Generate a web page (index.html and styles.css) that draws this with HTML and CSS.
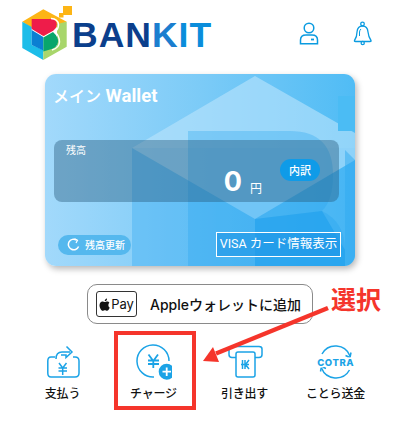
FILE: index.html
```html
<!DOCTYPE html>
<html lang="ja">
<head>
  <meta charset="UTF-8">
  <meta name="viewport" content="width=device-width, initial-scale=1.0">
  <title>BANKIT</title>
  <link rel="stylesheet" href="styles.css">
</head>
<body>
  <div class="page">
    <!-- Header with logo and account icons -->
    <div class="header">
      <svg class="logo" width="50" height="55" viewBox="22 6 50 55">
        <polygon points="43.300,9.300 66.700,21.700 60,25 44,36 22.300,21.700" fill="#fdb515"/>
        <polygon points="22.300,21.700 31.700,27 31.700,45 43.300,50 43.300,60 22.300,48" fill="#1dbde9"/>
        <polygon points="66.700,21.700 66.700,46.700 43.300,60 43.300,51 57,46 57,24" fill="#a8d66b"/>
        <polygon points="31.700,30 43.300,37 43.300,50.500 31.700,45" fill="#0b80d2"/>
        <path d="M43.300 37.500L53 32Q58.500 37 58 42Q57 48 50 49.500L43.300 51.500Z" fill="#08a66c"/>
        <path d="M31.700 19H51Q56.700 19 56.700 24.500Q56.500 29 51 32L43.300 36L31.700 29Z" fill="#ee1c4a"/>
        <path d="M51 18.500Q58 19 58.500 24.500Q58.500 29 55 32Q59.500 36 59.500 42Q59 48 52 50" fill="none" stroke="#fff" stroke-width="1.500"/>
        <rect x="63" y="6" width="9" height="9" fill="#fdb515"/>
        <rect x="59" y="13" width="4.500" height="4.500" fill="#fdb515"/>
      </svg>
      <div class="brand"><span class="brand-dark">BAN</span><span class="brand-k">K</span><span class="brand-light">IT</span></div>
      <div class="header-icons">
        <svg width="26" height="26" viewBox="296 20 26 26" fill="none" stroke="#0a9be0" stroke-width="1.500">
          <circle cx="309" cy="28" r="4.800"/>
          <path d="M300.500 43.800V40Q300.500 35 306 35H312Q317.500 35 317.500 40V43.800Z"/>
          <path d="M311 39.500H314" stroke-width="1.800"/>
        </svg>
        <svg width="26" height="26" viewBox="349 20 26 26" fill="none" stroke="#0a9be0" stroke-width="1.300">
          <circle cx="362.500" cy="24" r="1.800"/>
          <path d="M362.500 26Q357.500 26 357 32Q357 37 354.500 40.500Q354 41.500 355.500 41.500H370Q371.500 41.500 371 40.500Q368.500 37 368 32Q367.500 26 362.500 26Z"/>
          <circle cx="362.700" cy="43" r="1.600"/>
          <path d="M359.500 36V32Q359.700 30 361 29" stroke-width="1"/>
        </svg>
      </div>
    </div>

    <!-- Wallet card -->
    <div class="card">
      <svg class="card-bg" width="310" height="192" viewBox="45 74 310 192">
        <rect x="132" y="148" width="223" height="118" fill="#38acf2" opacity=".38"/>
        <polygon points="132,148 255,76 355,133 355,160 255,219" fill="#b9e4fc" opacity=".62"/>
        <path d="M188 131H290Q333 131 333 175Q333 200 322 211Q345 222 345 250V266H188Z" fill="#22a2ee" opacity=".3"/>
        <polygon points="255,219 322,211 345,250 345,266 255,266" fill="#159bec" opacity=".5"/>
        <polygon points="345,150 355,160 355,266 345,266" fill="#2fa9f0" opacity=".5"/>
        <rect x="338" y="96" width="17" height="35" fill="#4bbcf4"/>
      </svg>
      <div class="card-title"><span class="card-title-jp">メイン</span> Wallet</div>
      <div class="balance">
        <div class="balance-label">残高</div>
        <div class="balance-row">
          <span class="amount">0</span>
          <span class="yen">円</span>
          <span class="detail-btn">内訳</span>
        </div>
      </div>
      <div class="card-footer">
        <div class="refresh-btn">
          <svg width="13" height="13" viewBox="0 0 13 13" fill="none" stroke="#fff" stroke-width="1.500">
            <path d="M11.600 8.500A5.300 5.300 0 1 1 9.500 2"/>
            <path d="M7.500 .8L10.500 2.200L9 5" stroke-width="1.200"/>
          </svg>
          <span>残高更新</span>
        </div>
        <div class="visa-btn">VISA カード情報表示</div>
      </div>
    </div>

    <!-- Apple Pay button -->
    <div class="apple-row">
      <div class="apple-btn">
        <div class="pay-badge">
          <svg width="11" height="13" viewBox="0 0 11 13" fill="#111">
            <path d="M8.300 3.400C7.200 3.400 6.600 4 5.800 4C5 4 4.300 3.400 3.400 3.400C2 3.500 .5 4.700 .5 7.200C.5 9.700 2.300 12.800 3.700 12.800C4.500 12.800 4.900 12.200 5.900 12.200C6.900 12.200 7.200 12.800 8 12.800C9.200 12.800 10.200 11 10.700 9.500C9.300 8.900 8.800 6.200 10.400 4.700C9.900 3.900 9.100 3.400 8.300 3.400Z"/>
            <path d="M5.700 3.200C5.600 1.900 6.600 .6 8 .4C8.200 1.800 7 3.200 5.700 3.200Z"/>
          </svg>
          <span>Pay</span>
        </div>
        <span class="apple-text">Appleウォレットに追加</span>
      </div>
    </div>

    <!-- Bottom actions -->
    <div class="actions">
      <div class="action">
        <svg width="36" height="36" viewBox="45 343 36 36" fill="none" stroke="#1ba3e6" stroke-width="1.500">
          <path d="M55 356H51Q47.800 356 47.800 360V372Q47.800 376 51 376H75Q79 376 79 372V360Q79 356 75 356H73"/>
          <path d="M56 358Q56 351 62 351H70"/>
          <path d="M66.500 345.500L72 351L66 356.500L66 354L61 354"/>
          <path d="M59 362L62.700 367L66.500 362M58.500 367H67M58.500 370H67M62.700 367V374"/>
        </svg>
        <span class="action-label">支払う</span>
      </div>
      <div class="action action-picked">
        <svg width="36" height="36" viewBox="135 343 36 36" fill="none" stroke="#1ba3e6" stroke-width="1.500">
          <path d="M168 360A16 16 0 1 0 153 376"/>
          <path d="M147.500 353.500L152.300 360L157 353.500M147 359.500H158M147 363H158M152.300 360V367" stroke-width="1.800"/>
          <circle cx="165.700" cy="370.700" r="8" fill="#1ba3e6" stroke="none"/>
          <path d="M161.500 370.700H170M165.700 366.500V375" stroke="#fff" stroke-width="1.800"/>
        </svg>
        <span class="action-label">チャージ</span>
        <div class="pick-box"></div>
      </div>
      <div class="action">
        <svg width="36" height="36" viewBox="227 343 36 36" fill="none" stroke="#1ba3e6" stroke-width="1.500">
          <path d="M236 356.500H232Q229 356.500 229 353.500V348Q229 345.500 232 345.500H259Q262 345.500 262 348V353.500Q262 356.500 259 356.500H255"/>
          <rect x="236" y="351" width="19" height="25" rx="2" fill="#fff"/>
          <path d="M241 363.500H249M242.500 359V368M245 359V368M249 359L245.500 363.500L249 368"/>
        </svg>
        <span class="action-label">引き出す</span>
      </div>
      <div class="action">
        <svg width="40" height="36" viewBox="317 343 40 36" fill="none" stroke="#1ba3e6" stroke-width="1.500">
          <path d="M323 353A15.500 15.500 0 0 1 351 355"/>
          <path d="M351 356.500L352 351.500M351 356.500L346.500 354.500"/>
          <path d="M350.500 369A15.500 15.500 0 0 1 322.500 367"/>
          <path d="M322.500 365.500L321.500 370.500M322.500 365.500L327 367.500"/>
          <text class="cotra" x="336.700" y="365" text-anchor="middle">COTRA</text>
        </svg>
        <span class="action-label">ことら送金</span>
      </div>
    </div>

    <!-- Annotation drawn over the screenshot -->
    <div class="note">選択</div>
    <svg class="arrow" width="400" height="424" viewBox="0 0 400 424">
      <path d="M328 308L216 353.500" stroke="#f5352b" stroke-width="4.500"/>
      <polygon points="203,361 213,347 219,362" fill="#f5352b"/>
    </svg>
  </div>
</body>
</html>
```

FILE: styles.css
```css
/* General layout */
html, body {
  margin: 0;
  padding: 0;
  background-color: #fff;
  font-family: "Noto Sans CJK JP", sans-serif;
}

.page {
  position: relative;
  width: 400px;
  height: 424px;
  overflow: hidden;
}

/* Header */
.header {
  display: flex;
  align-items: flex-start;
  height: 74px;
  padding: 6px 0 0 22px;
  box-sizing: border-box;
}

.brand {
  font-family: "Liberation Sans", Arial, sans-serif;
  font-size: 35.500px;
  font-weight: bold;
  line-height: 36px;
  letter-spacing: 1px;
  margin-top: 11px;
}

.brand-dark {
  color: #0b3f8c;
}

.brand-k {
  color: #1b7ecf;
}

.brand-light {
  color: #0a8ddb;
}

.header-icons {
  display: flex;
  gap: 27px;
  margin: 14px 0 0 84px;
}

/* Wallet card */
.card {
  position: relative;
  display: flex;
  flex-direction: column;
  width: 310px;
  height: 192px;
  margin-left: 45px;
  border-radius: 11px;
  overflow: hidden;
  background: linear-gradient(90deg, #a2d9fb 0%, #7ccbf7 50%, #50bcf5 100%);
  color: #fff;
  box-shadow: 2px 3px 6px rgba(0, 0, 0, 0.28);
}

.card-bg {
  position: absolute;
  top: 0;
  left: 0;
}

.card-title {
  position: relative;
  font-family: "Roboto", "Noto Sans CJK JP", sans-serif;
  font-size: 18.500px;
  font-weight: bold;
  line-height: 24px;
  padding: 9px 0 0 8px;
}

.card-title-jp {
  font-family: "Noto Sans CJK JP", sans-serif;
  font-size: 16px;
  font-weight: 500;
}

.balance {
  position: relative;
  height: 62px;
  margin: 32px 16px 0 9px;
  padding: 3px 19px 0 12px;
  box-sizing: border-box;
  border-radius: 8px;
  background-color: rgba(40, 90, 125, 0.42);
}

.balance-label {
  font-size: 10px;
  line-height: 14px;
}

.balance-row {
  display: flex;
  justify-content: flex-end;
  align-items: flex-start;
}

.amount {
  font-family: "Inter", sans-serif;
  font-size: 27px;
  font-weight: bold;
  line-height: 30px;
  margin-top: 10px;
}

.yen {
  font-size: 12px;
  line-height: 16px;
  margin: 23px 18px 0 8px;
}

.detail-btn {
  width: 40px;
  height: 22px;
  margin-top: 2px;
  border-radius: 11px;
  background-color: #0f9be8;
  font-size: 11px;
  font-weight: 500;
  line-height: 22px;
  text-align: center;
}

.card-footer {
  position: relative;
  display: flex;
  justify-content: space-between;
  align-items: center;
  margin: 30px 14px 0 13px;
}

.refresh-btn {
  display: flex;
  align-items: center;
  gap: 5px;
  width: 73px;
  height: 20px;
  padding-left: 9px;
  box-sizing: border-box;
  border-radius: 10px;
  background-color: #55b8ee;
  font-size: 10px;
  font-weight: 500;
}

.visa-btn {
  width: 125px;
  height: 25px;
  box-sizing: border-box;
  border: 1px solid #fff;
  background-color: rgba(30, 150, 230, 0.6);
  font-family: "Roboto", "Noto Sans CJK JP", sans-serif;
  font-size: 12.500px;
  line-height: 22px;
  text-align: center;
  white-space: nowrap;
}

/* Apple Pay */
.apple-row {
  display: flex;
  justify-content: center;
  margin-top: 18px;
}

.apple-btn {
  display: flex;
  align-items: center;
  width: 226px;
  height: 40px;
  box-sizing: border-box;
  padding-left: 8px;
  border: 1px solid #8a8a8a;
  border-radius: 10px;
}

.pay-badge {
  display: flex;
  align-items: center;
  justify-content: center;
  gap: 1px;
  width: 41px;
  height: 26px;
  box-sizing: border-box;
  border: 1px solid #333;
  border-radius: 3px;
  font-family: "Inter", sans-serif;
  font-size: 13px;
  color: #111;
}

.apple-text {
  margin-left: 13px;
  font-family: "Inter", "Noto Sans CJK JP", sans-serif;
  font-size: 14px;
  font-weight: 500;
  color: #111;
  white-space: nowrap;
}

/* Bottom actions */
.actions {
  display: grid;
  grid-template-columns: repeat(4, 91px);
  padding: 20px 0 0 17px;
}

.action {
  position: relative;
  display: flex;
  flex-direction: column;
  align-items: center;
}

.action-label {
  margin-top: 4px;
  font-size: 12px;
  font-weight: 500;
  line-height: 17px;
  letter-spacing: -0.2px;
  color: #111;
  white-space: nowrap;
}

.pick-box {
  position: absolute;
  left: 6px;
  top: -13px;
  width: 82px;
  height: 79px;
  box-sizing: border-box;
  border: 4px solid #f5352b;
}

.cotra {
  font-family: "Inter", sans-serif;
  font-size: 9.500px;
  font-weight: 800;
  letter-spacing: .6px;
  fill: #1ba3e6;
  stroke: #fff;
  stroke-width: 3px;
  paint-order: stroke;
}

/* Annotation */
.note {
  position: absolute;
  left: 331px;
  top: 280px;
  font-size: 25px;
  font-weight: bold;
  line-height: 36px;
  color: #f5352b;
}

.arrow {
  position: absolute;
  top: 0;
  left: 0;
}
```
